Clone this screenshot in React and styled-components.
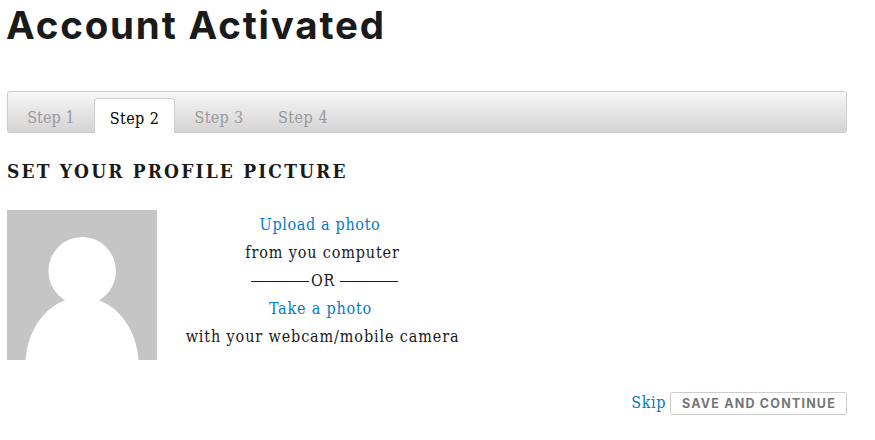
import React from "react";
import styled, { createGlobalStyle } from "styled-components";

const GlobalStyle = createGlobalStyle`
  * { box-sizing: border-box; }
  body {
    margin: 0;
    background: #fff;
    color: #1a1a1a;
    font: 16px/28px "DejaVu Serif Condensed", "DejaVu Serif", serif;
  }
`;

const Page = styled.main`
  width: 847px;
  height: 440px;
  padding-left: 7px;
  overflow: hidden;
`;

const Title = styled.h1`
  margin: 0 0 0 -1px;
  height: 91px;
  padding-top: 2px;
  font: 700 38.5px/46px Inter, sans-serif;
  letter-spacing: 1.82px;
  white-space: nowrap;
`;

const Tabs = styled.nav`
  display: flex;
  align-items: flex-start;
  height: 42px;
  padding: 6px 0 0 5px;
  border: 1px solid #ccc;
  border-radius: 3px;
  background: linear-gradient(#f7f7f7, #d5d3d4);
`;

const Tab = styled.a`
  height: 35px;
  width: ${(p) => p.$width}px;
  margin-left: ${(p) => p.$gap || 0}px;
  padding-top: ${(p) => (p.$active ? 6 : 5)}px;
  border: 1px solid ${(p) => (p.$active ? "#ccc" : "transparent")};
  border-bottom: 0;
  border-radius: 4px 4px 0 0;
  background: ${(p) => (p.$active ? "#fff" : "transparent")};
  color: ${(p) => (p.$active ? "#000" : "#999")};
  text-align: center;
  letter-spacing: ${(p) => p.$spacing || 0.1}px;
  white-space: nowrap;
`;

const Heading = styled.h2`
  margin: 24px 0 25px;
  font-size: 19px;
  line-height: 28px;
  letter-spacing: 2.17px;
  white-space: nowrap;
`;

const Profile = styled.section`
  display: flex;
  height: 150px;
`;

const Avatar = styled.svg`
  flex: none;
  width: 150px;
  height: 150px;
  background: #c5c5c5;
`;

const Options = styled.div`
  display: flex;
  flex-direction: column;
  align-items: center;
  width: 273px;
  margin-left: 29px;
  padding-top: 1px;
`;

const Line = styled.div`
  height: 28px;
  margin-left: ${(p) => p.$shift || 0}px;
  letter-spacing: ${(p) => p.$spacing}px;
  white-space: nowrap;
`;

const Link = styled.a`
  color: #007acc;
`;

const Divider = styled.div`
  display: flex;
  align-items: center;
  height: 28px;
  margin-left: 4px;
  letter-spacing: 0.7px;
`;

const Rule = styled.span`
  width: 58px;
  height: 1px;
  margin: 0 ${(p) => p.$right || 0}px 0 ${(p) => p.$left || 0}px;
  background: #1a1a1a;
`;

const Actions = styled.div`
  display: flex;
  justify-content: flex-end;
  align-items: flex-start;
  margin-top: 29px;
  letter-spacing: 0.6px;
`;

const SaveButton = styled.button`
  width: 177px;
  height: 23px;
  margin: 3px 0 0 4px;
  padding: 0 0 0 1px;
  border: 1px solid #ccc;
  border-radius: 2px;
  background: #fff;
  color: #767676;
  font: 700 12.5px/21px Inter, sans-serif;
  letter-spacing: 1.2px;
  white-space: nowrap;
`;

export default function App() {
  return (
    <Page>
      <GlobalStyle />
      <Title>Account Activated</Title>
      <Tabs>
        <Tab $width={76}>Step 1</Tab>
        <Tab $width={81} $gap={5} $spacing={0.4} $active>Step 2</Tab>
        <Tab $width={78} $gap={5} $spacing={0.3}>Step 3</Tab>
        <Tab $width={80} $gap={5} $spacing={0.5}>Step 4</Tab>
      </Tabs>
      <Heading>SET YOUR PROFILE PICTURE</Heading>
      <Profile>
        <Avatar viewBox="0 0 150 150" aria-label="Profile picture">
          <ellipse cx="75.2" cy="61" rx="33.8" ry="34" fill="#fff" />
          <path d="M18.5 150C21 119 38 97 59 90H91C112 97 129 119 131.5 150Z" fill="#fff" />
        </Avatar>
        <Options>
          <Line $spacing={0.65} $shift={-5}><Link>Upload a photo</Link></Line>
          <Line $spacing={0.86}>from you computer</Line>
          <Divider>
            <Rule $right={2} />
            OR
            <Rule $left={5} />
          </Divider>
          <Line $spacing={0.8} $shift={-4}><Link>Take a photo</Link></Line>
          <Line $spacing={0.88}>with your webcam/mobile camera</Line>
        </Options>
      </Profile>
      <Actions>
        <Link>Skip</Link>
        <SaveButton>SAVE AND CONTINUE</SaveButton>
      </Actions>
    </Page>
  );
}
